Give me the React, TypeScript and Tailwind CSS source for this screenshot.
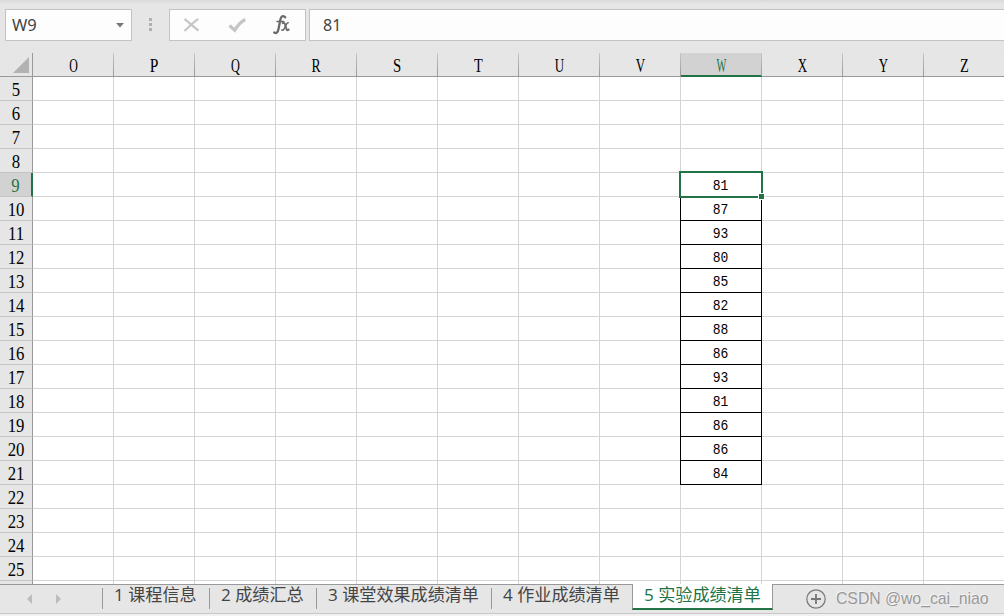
import clsx from 'clsx';

const COLUMNS = ['O', 'P', 'Q', 'R', 'S', 'T', 'U', 'V', 'W', 'X', 'Y', 'Z'];
const NARROW: Record<string, string> = {
  O: 'scale-x-[0.66]',
  P: 'scale-x-[0.86]',
  Q: 'scale-x-[0.68]',
  R: 'scale-x-[0.76]',
  S: 'scale-x-[0.82]',
  T: 'scale-x-[0.8]',
  U: 'scale-x-[0.72]',
  V: 'scale-x-[0.72]',
  W: 'scale-x-[0.58]',
  X: 'scale-x-[0.72]',
  Y: 'scale-x-[0.72]',
  Z: 'scale-x-[0.8]',
};
const ROWS = Array.from({ length: 21 }, (_, i) => i + 5);
const SCORES: Record<number, number> = {
  9: 81, 10: 87, 11: 93, 12: 80, 13: 85, 14: 82, 15: 88,
  16: 86, 17: 93, 18: 81, 19: 86, 20: 86, 21: 84,
};
const ACTIVE = { col: 'W', row: 9 };

const TABS = [
  { label: '1 课程信息', width: 'w-[107px]' },
  { label: '2 成绩汇总', width: 'w-[107px]' },
  { label: '3 课堂效果成绩清单', width: 'w-[175px]' },
  { label: '4 作业成绩清单', width: 'w-[141px]' },
];

function FormulaBar() {
  return (
    <div className="flex h-[53px] shrink-0 items-start bg-[#e6e6e6] bg-linear-to-b from-[#d9d9d9] to-[#e6e6e6] to-[4px] pt-[9px] pl-[5px] font-['Noto_Sans',sans-serif] text-[16px] text-[#444]">
      <div className="flex h-8 w-[127px] items-center justify-between border border-[#c3c3c3] bg-[#fdfdfd] pl-[6px] pr-[7px]">
        <span className="text-[16.5px] leading-[30px]">W9</span>
        <svg width="8" height="5" viewBox="0 0 8 5" fill="#777">
          <path d="M0 0h8L4 4.5z" />
        </svg>
      </div>
      <div className="ml-[17px] mt-[9px] flex w-[3px] flex-col gap-[2px]">
        <i className="h-[3px] bg-[#b0b0b0]" />
        <i className="h-[3px] bg-[#b0b0b0]" />
        <i className="h-[3px] bg-[#b0b0b0]" />
      </div>
      <div className="ml-[17px] h-8 w-[137px] border border-[#c3c3c3] bg-[#fdfdfd]">
        <svg width="135" height="30" viewBox="170 10 135 30" fill="none">
          <path d="M184.5 19.2C189 22.5 194 27 198.5 30.7M198.3 18.8C193.5 22 188.5 27 184.5 31" stroke="#c6c6c6" strokeWidth="2.2" />
          <path d="M229.5 25.5L234.8 30.3C237.5 25.5 240.5 22 245.3 19.5" stroke="#c6c6c6" strokeWidth="3.2" />
          <g stroke="#6a6a6a" strokeLinecap="round">
            <path d="M285.2 17.3C283.3 14.8 281 16.5 280.4 19.5L278.5 29C278 32 276.3 34.3 274.2 32.4" strokeWidth="2.3" />
            <path d="M277 21.5h6.8" strokeWidth="1.5" />
            <path d="M282.7 23.2C285.2 22 285.2 25 286 27.5C286.5 30 287.2 31 288.7 29.5" strokeWidth="1.9" />
            <path d="M288.2 22.8C286.5 22.8 285.5 26 284.3 28.5C283.6 30 282.8 30.6 281.8 30" strokeWidth="1.5" />
          </g>
        </svg>
      </div>
      <div className="ml-[3px] h-8 flex-1 border border-r-0 border-[#c3c3c3] bg-[#fdfdfd] pl-[13px] leading-[30px]">
        81
      </div>
    </div>
  );
}

function ColumnHeaders() {
  return (
    <div className="flex h-6 shrink-0 bg-[#e6e6e6]">
      <div className="flex h-6 w-[33px] shrink-0 items-start justify-end border-b border-r border-[#999] pr-[3px] pt-[4px]">
        <svg width="16" height="16" viewBox="0 0 16 16" fill="#b3b3b3">
          <path d="M16 0v16H0z" />
        </svg>
      </div>
      {COLUMNS.map((col) => {
        const active = col === ACTIVE.col;
        return (
          <div
            key={col}
            className={clsx(
              'relative flex h-6 w-[81px] shrink-0 justify-center',
              active
                ? 'border-b-2 border-[#217346] bg-[#d2d2d2] text-[#217346]'
                : 'border-b border-[#999] text-black'
            )}
          >
            <span className={clsx("font-['Liberation_Serif',serif] text-[18px] leading-[27px]", NARROW[col])}>
              {col}
            </span>
            <i className="absolute right-0 top-0 h-[23px] w-px bg-linear-to-b from-[#c6c6c6] to-[#999]" />
          </div>
        );
      })}
    </div>
  );
}

function Cell({ col, row }: { col: string; row: number }) {
  const value = col === 'W' ? SCORES[row] : undefined;
  const active = col === ACTIVE.col && row === ACTIVE.row;

  return (
    <div
      className={clsx(
        'relative h-6 w-[81px] shrink-0 border-b border-r text-center',
        value ? 'border-black' : 'border-[#d4d4d4]'
      )}
    >
      {value && (
        <>
          <i className="absolute -left-px -top-px h-[25px] w-px bg-black" />
          <span className="block scale-y-[1.15] pr-px font-['Liberation_Mono',monospace] text-[13px] leading-[28px] text-black">
            {value}
          </span>
        </>
      )}
      {active && (
        <div className="absolute -left-[2px] -top-[2px] z-10 h-[27px] w-[84px] border-2 border-[#217346]">
          <i className="absolute -bottom-[4px] -right-[4px] h-[7px] w-[7px] border border-white bg-[#217346]" />
        </div>
      )}
    </div>
  );
}

function Grid() {
  return (
    <div className="h-[507px] shrink-0 overflow-hidden bg-white">
      {ROWS.map((row) => (
        <div key={row} className="flex h-6">
          <div
            className={clsx(
              "h-6 w-[33px] shrink-0 border-b border-b-[#c4c4c4] text-center font-['Liberation_Serif',serif] text-[18px] leading-[26px]",
              row === ACTIVE.row
                ? 'border-r-2 border-r-[#217346] bg-[#d2d2d2] text-[#217346]'
                : 'border-r border-r-[#999] bg-[#e6e6e6] text-black'
            )}
          >
            <span className="block scale-x-[0.93]">{row}</span>
          </div>
          {COLUMNS.map((col) => (
            <Cell key={col} col={col} row={row} />
          ))}
        </div>
      ))}
      <div className="flex h-[3px]">
        <div className="w-[33px] shrink-0 border-r border-[#999] bg-[#e6e6e6]" />
        {COLUMNS.map((col) => (
          <div key={col} className="w-[81px] shrink-0 border-r border-[#d4d4d4]" />
        ))}
      </div>
    </div>
  );
}

function SheetTabs() {
  return (
    <div className="flex h-[30px] shrink-0 border-b border-[#c6c6c6] bg-[#e6e6e6] font-['Open_Sans','Noto_Sans_CJK_SC',sans-serif] text-[17.1px] text-[#444]">
      <div className="flex w-[102px] shrink-0 items-start gap-[24px] border-t border-[#999] pl-[27px] pt-[9px]">
        <svg width="5" height="10" viewBox="0 0 5 10" fill="#bcbcbc">
          <path d="M5 0v10L0 5z" />
        </svg>
        <svg width="5" height="10" viewBox="0 0 5 10" fill="#bcbcbc">
          <path d="M0 0v10l5-5z" />
        </svg>
      </div>
      {TABS.map((tab) => (
        <div key={tab.label} className={clsx('shrink-0 border-t border-[#999] pt-[3px]', tab.width)}>
          <div className="h-[21px] whitespace-nowrap border-l border-[#999] pl-[11px]">
            <span className="block leading-[14px]">{tab.label}</span>
          </div>
        </div>
      ))}
      <div className="h-[26px] w-[141px] shrink-0 whitespace-nowrap border-x border-b-2 border-x-[#999] border-b-[#217346] bg-white pl-[11px] pt-[4px] leading-[14px] text-[#217346]">
        5 实验成绩清单
      </div>
      <div className="flex flex-1 items-start border-t border-[#999] pl-[33px] pt-[4px]">
        <svg width="20" height="20" viewBox="0 0 20 20" fill="none" stroke="#777">
          <circle cx="10" cy="10" r="9.2" strokeWidth="1.2" />
          <path d="M10 5v10M5 10h10" strokeWidth="1.8" />
        </svg>
        <span className="ml-[10px] whitespace-nowrap font-['Liberation_Sans',sans-serif] text-[15.75px] leading-[19px] text-[#999] [text-shadow:-1px_-1px_0_#f4f4f4]">
          CSDN @wo_cai_niao
        </span>
      </div>
    </div>
  );
}

export default function App() {
  return (
    <div className="flex h-[616px] w-[1004px] flex-col overflow-hidden bg-[#f1f1f1]">
      <FormulaBar />
      <ColumnHeaders />
      <Grid />
      <SheetTabs />
    </div>
  );
}
